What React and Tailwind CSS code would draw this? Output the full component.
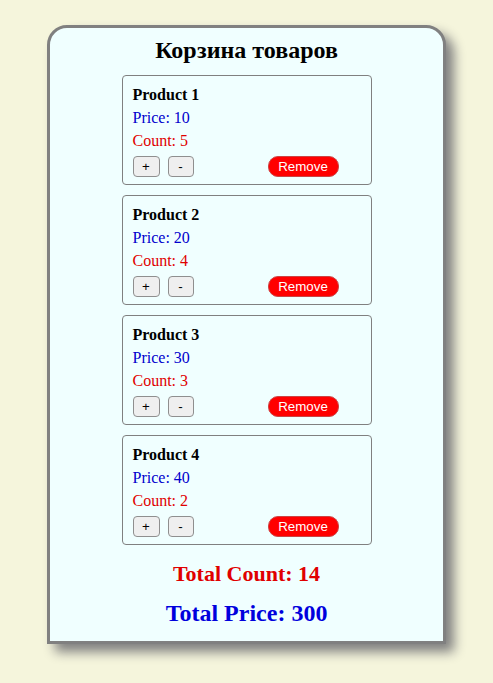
import React, { useState } from "react";

const initialProducts = [
  { id: 1, name: "Product 1", price: 10, count: 5 },
  { id: 2, name: "Product 2", price: 20, count: 4 },
  { id: 3, name: "Product 3", price: 30, count: 3 },
  { id: 4, name: "Product 4", price: 40, count: 2 },
];

// Single product card
const ProductCard = ({ product, onInc, onDec, onRemove }) => (
  <div className="w-[250px] h-[110px] border border-[#808080] rounded-[4px] px-[10px] pt-[10px]">
    <p className="font-bold text-[16px] leading-[18px] text-black">{product.name}</p>
    <p className="mt-[5px] text-[16px] leading-[18px] text-[#0000cd]">Price: {product.price}</p>
    <p className="mt-[5px] text-[16px] leading-[18px] text-[#e00000]">Count: {product.count}</p>
    <div className="flex items-center mt-[6px] font-['Liberation_Sans',Arial,sans-serif] text-[13.33px]">
      <button
        onClick={onInc}
        className="w-[27px] h-[21px] bg-[#efefef] border border-[#8f8f8f] rounded-[4px] text-black leading-none"
      >
        +
      </button>
      <button
        onClick={onDec}
        className="ml-[8px] w-[26px] h-[21px] bg-[#efefef] border border-[#8f8f8f] rounded-[4px] text-black leading-none"
      >
        -
      </button>
      <button
        onClick={onRemove}
        className="ml-[74px] w-[71px] h-[21px] bg-[#ff0000] border border-[#c44] rounded-[10px] text-white leading-none"
      >
        Remove
      </button>
    </div>
  </div>
);

export default function App() {
  const [products, setProducts] = useState(initialProducts);

  const update = (id, delta) =>
    setProducts((list) =>
      list.map((p) => (p.id === id ? { ...p, count: Math.max(0, p.count + delta) } : p))
    );
  const remove = (id) => setProducts((list) => list.filter((p) => p.id !== id));

  const totalCount = products.reduce((s, p) => s + p.count, 0);
  const totalPrice = products.reduce((s, p) => s + p.count * p.price, 0);

  return (
    <div className="min-h-[683px] w-full bg-[#f5f5dc] pt-[25px] font-['Liberation_Serif','Times_New_Roman',serif]">
      <div className="mx-auto w-[399px] h-[619px] bg-[#f0ffff] border-[3px] border-[#808080] rounded-t-[20px] shadow-[8px_8px_12px_#808080] flex flex-col items-center pt-[9px]">
        <h1 className="font-bold text-[24px] leading-[27px] text-black">Корзина товаров</h1>
        <div className="flex flex-col gap-[10px] mt-[11px]">
          {products.map((p) => (
            <ProductCard
              key={p.id}
              product={p}
              onInc={() => update(p.id, 1)}
              onDec={() => update(p.id, -1)}
              onRemove={() => remove(p.id)}
            />
          ))}
        </div>
        <p className="mt-[16px] font-bold text-[22px] leading-[25px] text-[#e00000]">Total Count: {totalCount}</p>
        <p className="mt-[14px] font-bold text-[24px] leading-[27px] text-[#0000dd]">Total Price: {totalPrice}</p>
      </div>
    </div>
  );
}
